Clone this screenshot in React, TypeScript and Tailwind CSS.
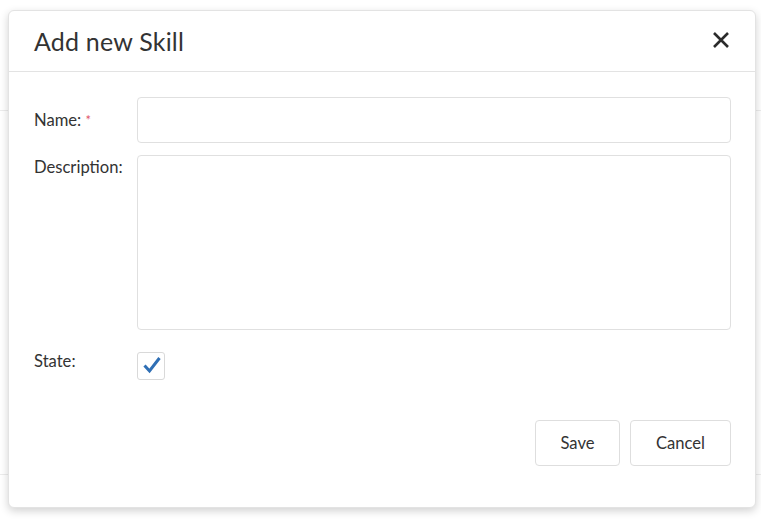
import React from 'react'

const font = { fontFamily: '"Lato", "Open Sans", "Liberation Sans", sans-serif' }

function CloseIcon() {
  return (
    <svg width="16" height="16" viewBox="0 0 16 16" className="block">
      <path d="M1 1 L15 15 M15 1 L1 15" stroke="#2b2b2b" strokeWidth="2.6" strokeLinecap="butt" />
    </svg>
  )
}

function CheckBox() {
  return (
    <div className="w-[28px] h-[28px] border border-[#d9d9d9] rounded-[3px] bg-white">
      <svg width="28" height="28" viewBox="0 0 28 28" className="block -mt-px -ml-px">
        <path d="M7.5 13.5 L12.5 19 L22.5 6" fill="none" stroke="#2f6fb5" strokeWidth="3" />
      </svg>
    </div>
  )
}

export default function App() {
  return (
    <div className="relative w-[761px] h-[519px] bg-white overflow-hidden" style={font}>
      {/* page behind the modal */}
      <div className="h-[111px] border-b border-[#ececec]" />
      <div className="h-[364px] border-b border-[#ececec]" />

      <div className="absolute left-[8px] top-[10px] w-[748px] h-[498px] bg-white rounded-[6px] border border-[#e3e3e3] shadow-[0_3px_8px_rgba(0,0,0,0.18)] flex flex-col">
        <div className="h-[61px] border-b border-[#e3e3e3] flex items-center justify-between pl-[25px] pr-[26px]">
          <h1 className="text-[25px] text-[#333] leading-none tracking-[0.2px]">Add new Skill</h1>
          <button className="-mt-[2px]">
            <CloseIcon />
          </button>
        </div>

        <div className="flex flex-col pt-[25px] pl-[25px] pr-[24px] text-[16.6px] text-[#333]">
          <div className="flex">
            <label className="w-[103px] pt-[11px] leading-[24px]">
              Name: <span className="text-[#e0556a] text-[13px] align-top">*</span>
            </label>
            <input className="flex-1 h-[46px] border border-[#e0e0e0] rounded-[4px] px-3 outline-none" />
          </div>
          <div className="flex mt-[12px]">
            <label className="w-[103px] pt-[0px] leading-[24px]">Description:</label>
            <textarea className="flex-1 h-[175px] border border-[#e0e0e0] rounded-[4px] px-3 py-2 outline-none resize-none" />
          </div>
          <div className="flex mt-[22px]">
            <label className="w-[103px] -mt-[3px] leading-[24px]">State:</label>
            <CheckBox />
          </div>
          <div className="flex justify-end gap-[10px] mt-[40px]">
            <button className="w-[85px] h-[46px] border border-[#dedede] rounded-[4px] bg-white text-[16.6px] text-[#333]">
              Save
            </button>
            <button className="w-[101px] h-[46px] border border-[#dedede] rounded-[4px] bg-white text-[16.6px] text-[#333]">
              Cancel
            </button>
          </div>
        </div>
      </div>
    </div>
  )
}
